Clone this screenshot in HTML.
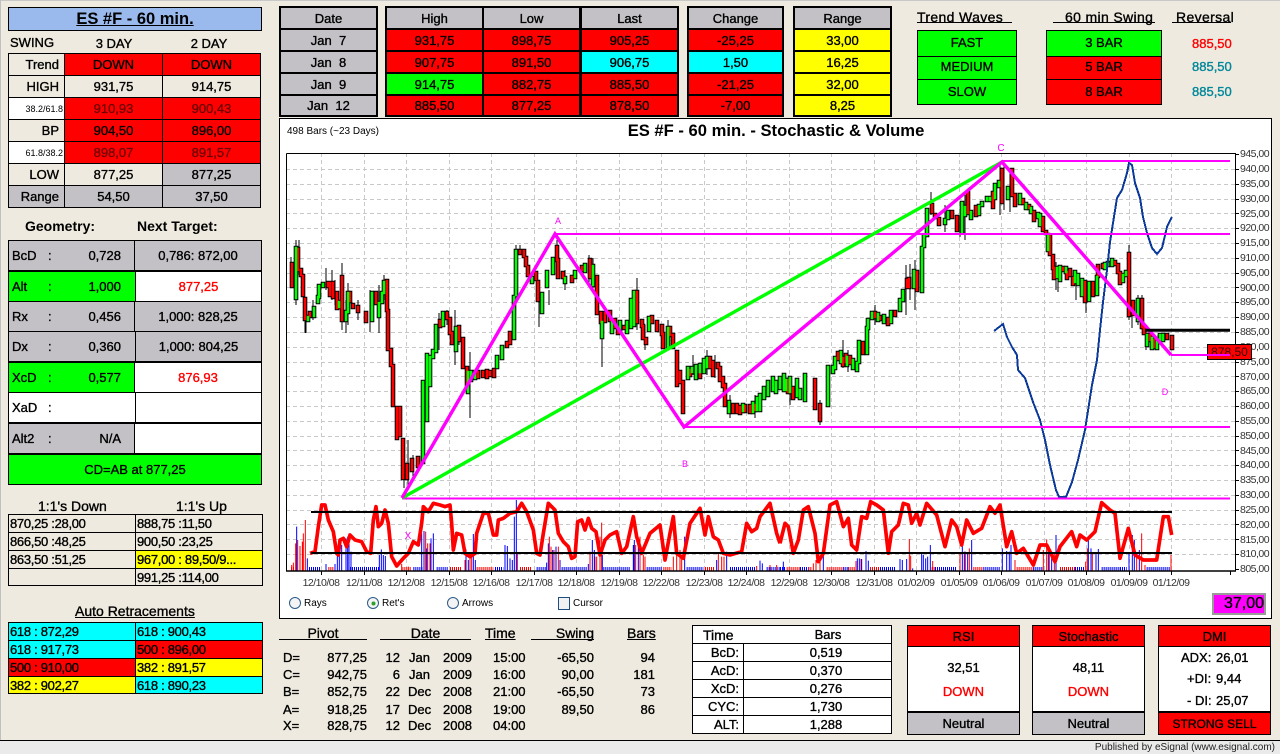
<!DOCTYPE html>
<html><head><meta charset="utf-8"><title>ES #F - 60 min.</title>
<style>
html,body{margin:0;padding:0}
body{width:1280px;height:754px;position:relative;overflow:hidden;background:#EEEADF;font:13px "Liberation Sans",Arial,sans-serif;color:#000;-webkit-text-stroke:.35px}
div{position:absolute;box-sizing:border-box;white-space:pre}
.c{display:flex;align-items:center;justify-content:center}
.b{border:1px solid #000}
.l{justify-content:flex-start;padding-left:1px;letter-spacing:-.3px}
.r{background:#f00}.g{background:#0f0}.y{background:#ff0}.a{background:#0ff}.s{background:#C3C1C5}.w{background:#fff}.e{background:#EEEADF}
.k{background:#000}
.t{font-weight:bold;-webkit-text-stroke:0}
.u{text-decoration:underline}
.h{font-size:14px}
.h2{font-size:14px;letter-spacing:.35px}
.rd{color:#f00}.tl{color:#00869A}
.m{color:#700000}
svg{position:absolute;left:0;top:0}
svg text{font-family:"Liberation Sans",Arial,sans-serif;-webkit-text-stroke:0}
</style></head><body>

<div style="left:0;top:0;width:1280px;height:1px;background:#c8c8c8"></div>
<div style="left:0;top:0;width:1px;height:740px;background:#c0c0c0"></div>
<div style="left:0;top:740px;width:1280px;height:1px;background:#000"></div>
<div style="left:0;top:741px;width:1280px;height:13px;background:#EAEAEA"></div>
<div class="c" style="right:5px;top:741px;height:13px;font-size:10px;-webkit-text-stroke:0;color:#222">Published by eSignal (www.esignal.com)</div>

<!-- LEFT TITLE -->
<div class="c b t u" style="left:8px;top:7px;width:254px;height:24px;background:#9ABAEE;font-size:16.5px">ES #F - 60 min.</div>
<div class="c" style="left:10px;top:34px;height:17px">SWING</div>
<div class="c" style="left:65px;top:35px;width:98px;height:17px">3 DAY</div>
<div class="c" style="left:162px;top:35px;width:94px;height:17px">2 DAY</div>

<div class="c b e" style="left:8px;top:53px;width:57px;height:23px;justify-content:flex-end;padding-right:5px">Trend</div>
<div class="c b r" style="left:64px;top:53px;width:99px;height:23px">DOWN</div>
<div class="c b r" style="left:162px;top:53px;width:99px;height:23px">DOWN</div>
<div class="c b e" style="left:8px;top:75px;width:57px;height:23px;justify-content:flex-end;padding-right:5px">HIGH</div>
<div class="c b e" style="left:64px;top:75px;width:99px;height:23px">931,75</div>
<div class="c b e" style="left:162px;top:75px;width:99px;height:23px">914,75</div>
<div class="c b w" style="left:8px;top:97px;width:57px;height:23px;font-size:9px;justify-content:flex-end;padding-right:1px;-webkit-text-stroke:0">38.2/61.8</div>
<div class="c b r m" style="left:64px;top:97px;width:99px;height:23px">910,93</div>
<div class="c b r m" style="left:162px;top:97px;width:99px;height:23px">900,43</div>
<div class="c b e" style="left:8px;top:119px;width:57px;height:23px;justify-content:flex-end;padding-right:5px">BP</div>
<div class="c b r" style="left:64px;top:119px;width:99px;height:23px">904,50</div>
<div class="c b r" style="left:162px;top:119px;width:99px;height:23px">896,00</div>
<div class="c b w" style="left:8px;top:141px;width:57px;height:23px;font-size:9px;justify-content:flex-end;padding-right:1px;-webkit-text-stroke:0">61.8/38.2</div>
<div class="c b r m" style="left:64px;top:141px;width:99px;height:23px">898,07</div>
<div class="c b r m" style="left:162px;top:141px;width:99px;height:23px">891,57</div>
<div class="c b e" style="left:8px;top:163px;width:57px;height:23px;justify-content:flex-end;padding-right:5px">LOW</div>
<div class="c b e" style="left:64px;top:163px;width:99px;height:23px">877,25</div>
<div class="c b s" style="left:162px;top:163px;width:99px;height:23px">877,25</div>
<div class="c b s" style="left:8px;top:185px;width:57px;height:23px;justify-content:flex-end;padding-right:5px">Range</div>
<div class="c b s" style="left:64px;top:185px;width:99px;height:23px">54,50</div>
<div class="c b s" style="left:162px;top:185px;width:99px;height:23px">37,50</div>

<div class="c t" style="left:25px;top:217px;height:18px;font-size:14px">Geometry:</div>
<div class="c t" style="left:137px;top:217px;height:18px;font-size:14px">Next Target:</div>

<!-- GEOMETRY -->
<div class="k" style="left:8px;top:240px;width:254px;height:245px"></div>
<div class="s" style="left:9px;top:241px;width:125px;height:29px"></div><div class="c s" style="left:135px;top:241px;width:126px;height:29px">0,786: 872,00</div>
<div class="g" style="left:9px;top:272px;width:126px;height:29px"></div><div class="c w rd" style="left:136px;top:272px;width:125px;height:29px">877,25</div>
<div class="s" style="left:9px;top:302px;width:125px;height:29px"></div><div class="c s" style="left:135px;top:302px;width:126px;height:29px">1,000: 828,25</div>
<div class="s" style="left:9px;top:332px;width:126px;height:29px"></div><div class="c s" style="left:136px;top:332px;width:125px;height:29px">1,000: 804,25</div>
<div class="g" style="left:9px;top:363px;width:125px;height:29px"></div><div class="c w rd" style="left:135px;top:363px;width:126px;height:29px">876,93</div>
<div class="w" style="left:9px;top:393px;width:126px;height:29px"></div><div class="w" style="left:136px;top:393px;width:125px;height:29px"></div>
<div class="s" style="left:9px;top:424px;width:125px;height:29px"></div><div class="w" style="left:135px;top:424px;width:126px;height:29px"></div>
<div class="c g" style="left:9px;top:455px;width:252px;height:29px">CD=AB at 877,25</div>
<div class="c" style="left:12px;top:247px;height:17px">BcD</div><div class="c" style="left:48px;top:247px;height:17px">:</div><div class="c" style="left:60px;top:247px;width:61px;height:17px;justify-content:flex-end">0,728</div>
<div class="c" style="left:12px;top:278px;height:17px">Alt</div><div class="c" style="left:48px;top:278px;height:17px">:</div><div class="c" style="left:60px;top:278px;width:61px;height:17px;justify-content:flex-end">1,000</div>
<div class="c" style="left:12px;top:308px;height:17px">Rx</div><div class="c" style="left:48px;top:308px;height:17px">:</div><div class="c" style="left:60px;top:308px;width:61px;height:17px;justify-content:flex-end">0,456</div>
<div class="c" style="left:12px;top:338px;height:17px">Dx</div><div class="c" style="left:48px;top:338px;height:17px">:</div><div class="c" style="left:60px;top:338px;width:61px;height:17px;justify-content:flex-end">0,360</div>
<div class="c" style="left:12px;top:369px;height:17px">XcD</div><div class="c" style="left:48px;top:369px;height:17px">:</div><div class="c" style="left:60px;top:369px;width:61px;height:17px;justify-content:flex-end">0,577</div>
<div class="c" style="left:12px;top:399px;height:17px">XaD</div><div class="c" style="left:48px;top:399px;height:17px">:</div>
<div class="c" style="left:12px;top:430px;height:17px">Alt2</div><div class="c" style="left:48px;top:430px;height:17px">:</div><div class="c" style="left:60px;top:430px;width:61px;height:17px;justify-content:flex-end">N/A</div>

<!-- 1:1 -->
<div class="c h" style="left:38px;top:497px;height:17px">1:1's Down</div>
<div class="c h" style="left:176px;top:497px;height:17px">1:1's Up</div>
<div class="c b l" style="left:8px;top:514px;width:128px;height:19px">870,25 :28,00</div><div class="c b l" style="left:135px;top:514px;width:128px;height:19px">888,75 :11,50</div>
<div class="c b l" style="left:8px;top:532px;width:128px;height:19px">866,50 :48,25</div><div class="c b l" style="left:135px;top:532px;width:128px;height:19px">900,50 :23,25</div>
<div class="c b l" style="left:8px;top:550px;width:128px;height:19px">863,50 :51,25</div><div class="c b l y" style="left:135px;top:550px;width:128px;height:19px">967,00 : 89,50/9...</div>
<div class="c b l" style="left:8px;top:568px;width:128px;height:18px"></div><div class="c b l" style="left:135px;top:568px;width:128px;height:18px">991,25 :114,00</div>

<div class="c u h" style="left:75px;top:602px;height:17px">Auto Retracements</div>
<div class="c b l a" style="left:8px;top:622px;width:128px;height:19px">618 : 872,29</div><div class="c b l a" style="left:135px;top:622px;width:128px;height:19px">618 : 900,43</div>
<div class="c b l a" style="left:8px;top:640px;width:128px;height:19px">618 : 917,73</div><div class="c b l r" style="left:135px;top:640px;width:128px;height:19px">500 : 896,00</div>
<div class="c b l r" style="left:8px;top:658px;width:128px;height:19px">500 : 910,00</div><div class="c b l y" style="left:135px;top:658px;width:128px;height:19px">382 : 891,57</div>
<div class="c b l y" style="left:8px;top:676px;width:128px;height:18px">382 : 902,27</div><div class="c b l a" style="left:135px;top:676px;width:128px;height:18px">618 : 890,23</div>

<!-- TOP TABLES -->
<div class="k" style="left:279px;top:6px;width:99px;height:111px"></div>
<div class="c s" style="left:281px;top:8px;width:95px;height:20px">Date</div>
<div class="c s" style="left:281px;top:30px;width:95px;height:20px">Jan  7</div>
<div class="c s" style="left:281px;top:52px;width:95px;height:20px">Jan  8</div>
<div class="c s" style="left:281px;top:74px;width:95px;height:20px">Jan  9</div>
<div class="c s" style="left:281px;top:96px;width:95px;height:19px">Jan  12</div>

<div class="k" style="left:385px;top:6px;width:294px;height:111px"></div>
<div class="c s" style="left:387px;top:8px;width:95px;height:20px">High</div><div class="c s" style="left:484px;top:8px;width:95px;height:20px">Low</div><div class="c s" style="left:582px;top:8px;width:95px;height:20px">Last</div>
<div class="c r" style="left:387px;top:30px;width:95px;height:20px">931,75</div><div class="c r" style="left:484px;top:30px;width:95px;height:20px">898,75</div><div class="c r" style="left:582px;top:30px;width:95px;height:20px">905,25</div>
<div class="c r" style="left:387px;top:52px;width:95px;height:20px">907,75</div><div class="c r" style="left:484px;top:52px;width:95px;height:20px">891,50</div><div class="c a" style="left:582px;top:52px;width:95px;height:20px">906,75</div>
<div class="c g" style="left:387px;top:74px;width:95px;height:20px">914,75</div><div class="c r" style="left:484px;top:74px;width:95px;height:20px">882,75</div><div class="c r" style="left:582px;top:74px;width:95px;height:20px">885,50</div>
<div class="c r" style="left:387px;top:96px;width:95px;height:19px">885,50</div><div class="c r" style="left:484px;top:96px;width:95px;height:19px">877,25</div><div class="c r" style="left:582px;top:96px;width:95px;height:19px">878,50</div>

<div class="k" style="left:687px;top:6px;width:97px;height:111px"></div>
<div class="c s" style="left:689px;top:8px;width:93px;height:20px">Change</div>
<div class="c r" style="left:689px;top:30px;width:93px;height:20px">-25,25</div>
<div class="c a" style="left:689px;top:52px;width:93px;height:20px">1,50</div>
<div class="c r" style="left:689px;top:74px;width:93px;height:20px">-21,25</div>
<div class="c r" style="left:689px;top:96px;width:93px;height:19px">-7,00</div>

<div class="k" style="left:793px;top:6px;width:99px;height:111px"></div>
<div class="c s" style="left:795px;top:8px;width:95px;height:20px">Range</div>
<div class="c y" style="left:795px;top:30px;width:95px;height:20px">33,00</div>
<div class="c y" style="left:795px;top:52px;width:95px;height:20px">16,25</div>
<div class="c y" style="left:795px;top:74px;width:95px;height:20px">32,00</div>
<div class="c y" style="left:795px;top:96px;width:95px;height:19px">8,25</div>

<div class="c h2" style="left:917px;top:8px;height:17px">Trend Waves</div><div class="k" style="left:917px;top:22px;width:95px;height:1px"></div>
<div class="c h2" style="left:1065px;top:8px;height:17px">60 min Swing</div><div class="k" style="left:1053px;top:22px;width:102px;height:1px"></div>
<div class="c h2" style="left:1176px;top:8px;height:17px">Reversal</div><div class="k" style="left:1172px;top:22px;width:59px;height:1px"></div>

<div class="c b g" style="left:917px;top:30px;width:100px;height:27px;padding-bottom:2px">FAST</div>
<div class="c b g" style="left:917px;top:56px;width:100px;height:24px;padding-bottom:3px">MEDIUM</div>
<div class="c b g" style="left:917px;top:79px;width:100px;height:26px;padding-bottom:2px">SLOW</div>
<div class="c b g" style="left:1046px;top:30px;width:116px;height:27px;padding-bottom:2px">3 BAR</div>
<div class="c b r" style="left:1046px;top:56px;width:116px;height:24px;padding-bottom:3px">5 BAR</div>
<div class="c b r" style="left:1046px;top:79px;width:116px;height:26px;padding-bottom:2px">8 BAR</div>
<div class="c rd" style="left:1192px;top:35px;height:17px">885,50</div>
<div class="c tl" style="left:1192px;top:58px;height:17px">885,50</div>
<div class="c tl" style="left:1192px;top:83px;height:17px">885,50</div>

<!-- CHART FRAME -->
<div class="b w" style="left:279px;top:118px;width:993px;height:501px"></div>
<div class="c t" style="left:500px;top:121px;width:552px;height:19px;font-size:16.6px">ES #F - 60 min. - Stochastic &amp; Volume</div>
<div class="c" style="left:287px;top:124px;height:14px;font-size:10px;-webkit-text-stroke:0">498 Bars (~23 Days)</div>

<svg width="1280" height="754" viewBox="0 0 1280 754">
<defs>
<path id="rb" d="M292 264V286M298 249V270M301 270V275M303 276V295M305 299V319M310 313V316M328 283V286M330 283V295M333 283V297M337 293V308M342 277V320M350 293V301M353 305V307M358 307V311M366 313V321M376 293V303M387 281V310M388 311V349M391 350V365M393 366V405M397 408V438M400 408V435M403 440V478M407 465V478M412 460V470M418 458V466M440 321V326M447 313V318M450 319V333M452 333V343M459 327V340M463 339V367M467 368V385M478 372V377M483 372V376M487 371V377M490 372V375M494 370V376M507 343V346M510 333V343M520 251V253M524 251V256M526 258V265M528 267V275M536 273V279M538 282V300M557 247V260M558 260V277M563 273V277M572 277V281M582 267V270M590 260V277M597 277V313M601 313V322M605 313V321M610 312V320M615 320V327M618 327V333M624 327V328M637 292V322M642 321V326M643 326V338M646 339V343M652 317V322M657 322V330M662 326V334M663 334V347M670 328V335M673 335V347M677 352V385M680 372V382M683 382V412M690 370V375M700 370V377M710 358V367M713 362V375M718 364V367M720 368V380M723 378V386M725 385V405M733 405V412M737 405V412M740 407V413M745 406V411M750 406V412M755 405V410M788 380V392M793 388V398M815 380V408M820 405V420M838 353V359M843 358V365M846 355V362M850 357V363M863 343V353M875 313V317M880 317V319M888 319V324M895 312V315M907 280V287M909 279V287M917 272V290M932 205V212M935 215V217M939 219V224M952 212V217M957 217V230M968 193V213M976 207V215M993 193V207M1002 170V202M1012 170V195M1015 195V205M1023 200V203M1029 206V208M1034 212V220M1043 218V230M1046 232V233M1050 236V254M1053 256V268M1054 268V278M1063 268V270M1067 272V278M1070 270V275M1073 278V284M1085 282V301M1093 283V295M1098 266V276M1103 265V267M1115 262V264M1118 265V272M1120 273V283M1129 254V315M1133 302V314M1142 300V327M1144 327V333M1150 335V340M1154 340V347M1167 335V338M1172 337V348"/>
<path id="gb" d="M296 248V298M308 317V320M314 308V316M318 297V302M319 286V297M323 284V286M339 302V307M346 312V320M348 293V312M372 293V320M379 303V316M382 293V302M384 282V293M423 382V462M427 355V420M430 357V385M433 351V357M436 326V351M443 313V325M456 328V350M468 372V392M471 372V380M475 372V378M497 357V367M502 347V358M514 297V338M516 251V295M532 278V282M542 294V312M547 272V286M553 259V273M565 278V282M575 272V277M585 265V271M593 266V285M602 322V337M612 322V332M620 322V330M627 322V332M631 300V327M634 292V325M649 318V330M668 328V347M688 368V378M692 368V372M696 366V378M700 365V372M704 360V372M707 358V367M729 402V412M743 405V411M753 403V412M757 398V410M760 395V410M764 388V398M768 382V395M773 378V390M776 382V392M780 378V388M784 375V390M786 380V390M790 378V392M797 380V396M800 390V398M805 375V400M828 367V405M833 367V372M835 358V368M841 352V362M847 357V365M853 360V368M857 363V370M859 342V362M867 328V353M868 320V328M872 313V318M878 314V320M884 316V322M891 312V322M900 300V310M903 291V300M914 271V287M922 248V291M924 236V246M927 210V235M945 220V223M948 212V218M962 203V232M965 207V215M971 212V218M979 206V214M982 203V205M987 198V200M990 198V200M995 185V198M999 182V186M1008 188V198M1020 195V203M1026 204V208M1031 208V212M1038 214V217M1040 215V225M1048 235V250M1057 268V277M1060 267V280M1066 268V272M1075 272V282M1078 275V284M1082 280V295M1089 283V300M1097 277V294M1105 264V268M1108 263V265M1112 260V265M1123 275V281M1126 272V275M1138 300V320M1147 335V345M1152 338V348M1160 335V340M1163 335V340M1157 342V348"/>
</defs>
<!-- grid -->
<path d="M286 169.5H1235M286 184.5H1235M286 199.5H1235M286 213.5H1235M286 228.5H1235M286 243.5H1235M286 258.5H1235M286 273.5H1235M286 287.5H1235M286 302.5H1235M286 317.5H1235M286 332.5H1235M286 347.5H1235M286 362.5H1235M286 376.5H1235M286 391.5H1235M286 406.5H1235M286 421.5H1235M286 436.5H1235M286 450.5H1235M286 465.5H1235M286 480.5H1235M286 495.5H1235M286 510.5H1235M286 524.5H1235M286 539.5H1235M286 554.5H1235" stroke="#c9c9c9" stroke-width="1" stroke-dasharray="4 3" fill="none"/>
<path d="M321.5 153V571M364.5 153V571M406.5 153V571M449.5 153V571M491.5 153V571M534.5 153V571M576.5 153V571M619.5 153V571M661.5 153V571M704.5 153V571M746.5 153V571M789.5 153V571M831.5 153V571M874.5 153V571M916.5 153V571M959.5 153V571M1001.5 153V571M1044.5 153V571M1086.5 153V571M1129.5 153V571M1171.5 153V571" stroke="#c9c9c9" stroke-width="1" stroke-dasharray="4 3" fill="none"/>

<!-- wicks -->
<path d="M291 257V287M296 240V305M299 240V275M305 300V333M306 315V333M313 300V320M326 268V290M332 270V300M335 280V305M342 263V330M346 300V333M348 283V325M358 300V320M370 290V332M379 285V333M384 275V300M408 440V490M404 470V488M413 455V480M439 313V350M447 310V325M455 310V365M459 325V345M470 352V418M516 245V251M520 245V255M539 300V327M549 290V305M557 240V262M565 270V290M589 255V285M593 258V290M602 333V367M637 278V330M645 325V350M668 320V350M693 355V375M707 350V375M715 355V378M730 395V418M755 395V418M790 380V405M820 400V425M843 340V368M848 350V372M875 305V325M906 265V315M910 264V300M915 260V310M931 192V215M945 205V232M965 195V240M960 215V237M1000 162V215M1004 162V210M1010 170V212M1056 262V290M1058 275V292M1086 298V313M1076 275V300M1129 245V320M1132 300V328M1138 295V325M1142 295V330M1146 328V350M1151 330V350M1158 335V350" stroke="#000" stroke-width="1" fill="none"/>
<!-- candles -->
<g fill="none" stroke-linecap="square">
<use href="#rb" stroke="#000" stroke-width="4.6"/><use href="#gb" stroke="#000" stroke-width="4.6"/>
<use href="#rb" stroke="#f00" stroke-width="2.6"/><use href="#gb" stroke="#0f0" stroke-width="2.6"/>
</g>

<!-- blue line -->
<polyline fill="none" stroke="#0B3A9A" stroke-width="2" shape-rendering="crispEdges" points="994,331 1003,324 1007,337 1012,347 1017,355 1018,370 1025,378 1033,402 1040,420 1045,440 1050,465 1056,490 1059,497 1066,497 1072,482 1078,460 1085,430 1092,385 1097,360 1100,330 1103,302 1107,270 1110,242 1113,223 1117,198 1122,190 1127,173 1129,163 1132,165 1135,183 1140,198 1143,217 1147,233 1152,248 1157,254 1162,248 1167,227 1172,217"/>

<!-- horizontals -->
<path d="M402 498.5H1230M555 234H1230M1002 161H1230M684 427H1230M1171 355H1230" stroke="#f0f" stroke-width="2" fill="none"/>
<path d="M402 498L1002 162" stroke="#0f0" stroke-width="3.4" fill="none"/>
<polyline points="402,498 555,234 684,427 1002,162 1171,355" stroke="#f0f" stroke-width="3.4" fill="none"/>
<path d="M1145 330.2H1230" stroke="#000" stroke-width="3" fill="none"/>

<text x="1001" y="151" font-size="10" fill="#f0f" text-anchor="middle">C</text>
<text x="558" y="224" font-size="9" fill="#f0f" text-anchor="middle">A</text>
<text x="685" y="467" font-size="9" fill="#f0f" text-anchor="middle">B</text>
<text x="1165" y="395" font-size="9" fill="#f0f" text-anchor="middle">D</text>
<text x="408" y="539" font-size="10" fill="#f0f" text-anchor="middle">X</text>

<!-- volume -->
<g transform="translate(280 490) scale(.33333)" fill="none" stroke-width="3">
<path stroke="#f00" stroke-dasharray="3 3" stroke-width="12" d="M33 237H45M145 237H160M365 237H395M510 237H545M590 237H640M720 237H755M1150 237H1175M1275 237H1305"/>
<path stroke="#00f" stroke-dasharray="3 3" stroke-width="12" d="M87 237H120M210 237H300M400 237H430M470 237H505M645 237H670M770 237H800M845 237H920M970 237H1050M1100 237H1145M1220 237H1270M1350 237H1425M1460 237H1500"/>
<path stroke="#f00" d="M35 243V225M40 243V218M47 243V160M53 243V150M60 243V168M67 243V155M70 243V130M76 243V90M365 243V222M385 243V230M437 243V125M443 243V160M450 243V160M555 243V210M570 243V190M575 243V190M712 243V190M808 243V140M813 243V170M822 243V180M835 243V170M930 243V185M945 243V200M950 243V200M960 243V140M965 243V98M1067 243V165M1080 243V140M1090 243V195M1095 243V200M1180 243V200M1190 243V190M1200 243V180M1205 243V200M1315 243V190M1325 243V200M1332 243V200M1430 243V228M1470 243V225M1490 243V225"/>
<path stroke="#00f" d="M50 243V110M82 243V205M138 243V222M165 243V222M172 243V190M178 243V150M185 243V165M198 243V145M203 243V140M207 243V130M213 243V185M298 243V195M304 243V178M310 243V195M316 243V198M425 243V130M432 243V123M440 243V175M453 243V145M460 243V130M558 243V178M565 243V210M580 243V132M586 243V210M675 243V165M682 243V168M690 243V205M697 243V210M703 243V80M709 243V30M800 243V218M805 243V160M818 243V180M828 243V170M840 243V210M925 243V222M937 243V150M943 243V180M967 243V195M1060 243V165M1063 243V150M1075 243V165M1214 243V140M1310 243V210M1340 243V185M1440 243V212M1447 243V220"/>
</g>
<g transform="translate(780 490) scale(.33333)" fill="none" stroke-width="3">
<path stroke="#f00" stroke-dasharray="3 3" stroke-width="12" d="M20 237H60M85 237H95M140 237H190M205 237H225M270 237H300M455 237H465M580 237H610M710 237H760M840 237H885"/>
<path stroke="#00f" stroke-dasharray="3 3" stroke-width="12" d="M0 237H15M60 237H85M190 237H205M300 237H345M465 237H530M610 237H660M760 237H790M885 237H915M965 237H1020M1020 237H1040M1100 237H1170"/>
<path stroke="#f00" d="M100 243V220M108 243V210M120 243V200M228 243V213M243 243V207M388 243V147M392 243V197M458 243V213M540 243V190M556 243V185M568 243V175M705 243V210M790 243V180M800 243V148M808 243V172M823 243V190M917 243V215M922 243V175M937 243V190M1070 243V195M1085 243V130M1095 243V225M1173 243V195"/>
<path stroke="#00f" d="M10 243V215M130 243V195M232 243V205M238 243V205M245 243V207M258 243V183M265 243V212M360 243V207M367 243V210M380 243V207M398 243V235M425 243V190M430 243V195M437 243V205M443 243V200M451 243V165M547 243V162M553 243V185M563 243V190M575 243V150M667 243V175M680 243V183M688 243V185M693 243V165M805 243V175M815 243V190M828 243V135M925 243V150M933 243V175M948 243V187M955 243V177M1047 243V190M1057 243V135M1063 243V150M1078 243V180"/>
</g>

<!-- oscillator -->
<polyline transform="translate(280 490) scale(.33333)" fill="none" stroke="#f00" stroke-width="11" stroke-linejoin="round" points="90,190 105,185 115,110 125,45 135,45 145,90 160,125 170,190 175,195 180,150 190,145 200,170 210,135 225,150 245,155 260,185 272,190 280,90 288,50 295,110 305,100 315,60 325,100 335,200 350,228 370,205 385,190 400,155 415,165 425,100 430,50 445,65 460,40 480,45 495,50 510,45 515,100 520,180 530,130 545,135 555,190 570,200 585,190 590,130 610,70 625,70 640,135 650,135 655,90 670,85 690,70 710,65 725,40 740,65 760,120 770,190 780,195 790,130 805,40 825,60 835,130 850,155 865,170 875,205 885,200 893,95 905,90 915,120 925,85 935,115 948,125 960,195 975,150 990,135 1010,125 1025,190 1040,170 1060,80 1070,140 1085,190 1110,130 1140,105 1155,210 1170,130 1180,80 1190,190 1210,205 1230,100 1260,55 1275,135 1285,80 1300,140 1315,150 1330,190 1350,195 1385,185 1400,100 1415,125 1430,115 1440,80 1470,40 1490,130 1500,160"/>
<polyline transform="translate(780 490) scale(.33333)" fill="none" stroke="#f00" stroke-width="11" stroke-linejoin="round" points="0,160 15,100 25,110 40,190 55,150 70,60 85,50 105,130 115,215 130,190 150,45 170,35 190,110 205,85 215,165 230,180 245,80 260,85 272,35 290,45 310,60 325,190 335,125 355,105 370,40 385,45 395,100 410,70 420,105 440,40 470,75 495,170 515,90 530,110 545,165 560,90 580,130 605,115 630,50 645,70 660,45 680,170 695,125 710,190 730,175 760,225 780,165 800,165 825,215 840,170 875,125 890,170 900,135 920,150 945,125 965,38 990,60 1005,70 1020,205 1045,115 1065,195 1090,210 1130,210 1150,80 1165,80 1175,135"/>
<path d="M311 512H1172M311 553H1172" stroke="#000" stroke-width="2" fill="none"/>

<!-- axes -->
<path d="M286.5 153.5H1235.5V571M286.5 153.5V571" stroke="#000" stroke-width="1" fill="none"/>
<path d="M286 571H1236" stroke="#000" stroke-width="1.6" fill="none"/>
<path d="M321.5 571V575M364.5 571V575M406.5 571V575M449.5 571V575M491.5 571V575M534.5 571V575M576.5 571V575M619.5 571V575M661.5 571V575M704.5 571V575M746.5 571V575M789.5 571V575M831.5 571V575M874.5 571V575M916.5 571V575M959.5 571V575M1001.5 571V575M1044.5 571V575M1086.5 571V575M1129.5 571V575M1171.5 571V575M1230.5 571V575" stroke="#000" fill="none"/>
<path d="M1235 154.5H1239M1235 169.5H1239M1235 184.5H1239M1235 199.5H1239M1235 213.5H1239M1235 228.5H1239M1235 243.5H1239M1235 258.5H1239M1235 273.5H1239M1235 287.5H1239M1235 302.5H1239M1235 317.5H1239M1235 332.5H1239M1235 347.5H1239M1235 362.5H1239M1235 376.5H1239M1235 391.5H1239M1235 406.5H1239M1235 421.5H1239M1235 436.5H1239M1235 450.5H1239M1235 465.5H1239M1235 480.5H1239M1235 495.5H1239M1235 510.5H1239M1235 524.5H1239M1235 539.5H1239M1235 554.5H1239M1235 569.5H1239" stroke="#000" fill="none"/>

<!-- price labels -->
<g font-size="10.5" fill="#333" letter-spacing="-.5">
<text x="1240" y="157">945,00</text><text x="1240" y="172">940,00</text><text x="1240" y="187">935,00</text><text x="1240" y="202">930,00</text><text x="1240" y="217">925,00</text><text x="1240" y="231">920,00</text><text x="1240" y="246">915,00</text><text x="1240" y="261">910,00</text><text x="1240" y="276">905,00</text><text x="1240" y="291">900,00</text><text x="1240" y="305">895,00</text><text x="1240" y="320">890,00</text><text x="1240" y="335">885,00</text><text x="1240" y="350">880,00</text><text x="1240" y="365">875,00</text><text x="1240" y="380">870,00</text><text x="1240" y="394">865,00</text><text x="1240" y="409">860,00</text><text x="1240" y="424">855,00</text><text x="1240" y="439">850,00</text><text x="1240" y="454">845,00</text><text x="1240" y="468">840,00</text><text x="1240" y="483">835,00</text><text x="1240" y="498">830,00</text><text x="1240" y="513">825,00</text><text x="1240" y="528">820,00</text><text x="1240" y="543">815,00</text><text x="1240" y="557">810,00</text><text x="1240" y="572">805,00</text>
</g>
<g font-size="10.5" fill="#333" letter-spacing="-.5" text-anchor="middle">
<text x="321" y="586">12/10/08</text><text x="364" y="586">12/11/08</text><text x="406" y="586">12/12/08</text><text x="449" y="586">12/15/08</text><text x="491" y="586">12/16/08</text><text x="534" y="586">12/17/08</text><text x="576" y="586">12/18/08</text><text x="619" y="586">12/19/08</text><text x="661" y="586">12/22/08</text><text x="704" y="586">12/23/08</text><text x="746" y="586">12/24/08</text><text x="789" y="586">12/29/08</text><text x="831" y="586">12/30/08</text><text x="874" y="586">12/31/08</text><text x="916" y="586">01/02/09</text><text x="959" y="586">01/05/09</text><text x="1001" y="586">01/06/09</text><text x="1044" y="586">01/07/09</text><text x="1086" y="586">01/08/09</text><text x="1129" y="586">01/09/09</text><text x="1171" y="586">01/12/09</text>
</g>

<!-- label box -->
<rect x="1207.5" y="344.5" width="44" height="15" fill="#f00" stroke="#000"/>
<text x="1229.5" y="356" font-size="12" fill="#300" text-anchor="middle">878,50</text>
<path d="M1171 355H1230" stroke="#f0f" stroke-width="2" fill="none"/>

<!-- radios -->
<circle cx="295" cy="603" r="5.5" fill="#f4f4f4" stroke="#2A5A8A"/>
<circle cx="373" cy="603" r="5.5" fill="#f4f4f4" stroke="#2A5A8A"/><circle cx="373.5" cy="603.5" r="2" fill="#2CA02C"/>
<circle cx="453" cy="603" r="5.5" fill="#f4f4f4" stroke="#2A5A8A"/>
<rect x="558.5" y="597.5" width="11" height="12" fill="#f2f2f2" stroke="#1C4E80"/>
<g font-size="10" fill="#000">
<text x="304" y="606">Rays</text><text x="382" y="606">Ret's</text><text x="462" y="606">Arrows</text><text x="573" y="606">Cursor</text>
</g>
</svg>

<div class="c" style="left:1212px;top:593px;width:54px;height:22px;background:#f0f;border:2px solid #9a9a9a;font-size:16px;justify-content:flex-end;padding-right:0">37,00</div>

<!-- PIVOT TABLE -->
<div class="c h" style="left:279px;top:625px;width:88px;height:16px">Pivot</div><div class="k" style="left:279px;top:639px;width:88px;height:1px"></div>
<div class="c h" style="left:380px;top:625px;width:91px;height:16px">Date</div><div class="k" style="left:380px;top:639px;width:91px;height:1px"></div>
<div class="c u h" style="left:485px;top:625px;height:16px">Time</div>
<div class="c h" style="left:531px;top:625px;width:63px;height:16px;justify-content:flex-end">Swing</div><div class="k" style="left:531px;top:639px;width:63px;height:1px"></div>
<div class="c u h" style="left:627px;top:625px;height:16px">Bars</div>

<div class="c" style="left:283px;top:649px;height:16px">D=</div><div class="c" style="left:300px;top:649px;width:67px;height:16px;justify-content:flex-end">877,25</div><div class="c" style="left:380px;top:649px;width:20px;height:16px;justify-content:flex-end">12</div><div class="c" style="left:409px;top:649px;height:16px">Jan</div><div class="c" style="left:443px;top:649px;height:16px">2009</div><div class="c" style="left:493px;top:649px;height:16px">15:00</div><div class="c" style="left:540px;top:649px;width:54px;height:16px;justify-content:flex-end">-65,50</div><div class="c" style="left:620px;top:649px;width:35px;height:16px;justify-content:flex-end">94</div>
<div class="c" style="left:283px;top:666px;height:16px">C=</div><div class="c" style="left:300px;top:666px;width:67px;height:16px;justify-content:flex-end">942,75</div><div class="c" style="left:380px;top:666px;width:20px;height:16px;justify-content:flex-end">6</div><div class="c" style="left:409px;top:666px;height:16px">Jan</div><div class="c" style="left:443px;top:666px;height:16px">2009</div><div class="c" style="left:493px;top:666px;height:16px">16:00</div><div class="c" style="left:540px;top:666px;width:54px;height:16px;justify-content:flex-end">90,00</div><div class="c" style="left:620px;top:666px;width:35px;height:16px;justify-content:flex-end">181</div>
<div class="c" style="left:283px;top:683px;height:16px">B=</div><div class="c" style="left:300px;top:683px;width:67px;height:16px;justify-content:flex-end">852,75</div><div class="c" style="left:380px;top:683px;width:20px;height:16px;justify-content:flex-end">22</div><div class="c" style="left:408px;top:683px;height:16px">Dec</div><div class="c" style="left:443px;top:683px;height:16px">2008</div><div class="c" style="left:493px;top:683px;height:16px">21:00</div><div class="c" style="left:540px;top:683px;width:54px;height:16px;justify-content:flex-end">-65,50</div><div class="c" style="left:620px;top:683px;width:35px;height:16px;justify-content:flex-end">73</div>
<div class="c" style="left:283px;top:701px;height:16px">A=</div><div class="c" style="left:300px;top:701px;width:67px;height:16px;justify-content:flex-end">918,25</div><div class="c" style="left:380px;top:701px;width:20px;height:16px;justify-content:flex-end">17</div><div class="c" style="left:408px;top:701px;height:16px">Dec</div><div class="c" style="left:443px;top:701px;height:16px">2008</div><div class="c" style="left:493px;top:701px;height:16px">19:00</div><div class="c" style="left:540px;top:701px;width:54px;height:16px;justify-content:flex-end">89,50</div><div class="c" style="left:620px;top:701px;width:35px;height:16px;justify-content:flex-end">86</div>
<div class="c" style="left:283px;top:717px;height:16px">X=</div><div class="c" style="left:300px;top:717px;width:67px;height:16px;justify-content:flex-end">828,75</div><div class="c" style="left:380px;top:717px;width:20px;height:16px;justify-content:flex-end">12</div><div class="c" style="left:408px;top:717px;height:16px">Dec</div><div class="c" style="left:443px;top:717px;height:16px">2008</div><div class="c" style="left:493px;top:717px;height:16px">04:00</div>

<!-- TIME/BARS -->
<div class="b w" style="left:692px;top:625px;width:200px;height:19px"></div>
<div class="c h" style="left:703px;top:626px;height:17px">Time</div><div class="c" style="left:770px;top:626px;width:116px;height:17px">Bars</div>
<div class="c b w" style="left:692px;top:643px;width:52px;height:19px;justify-content:flex-end;padding-right:4px">BcD:</div><div class="c b w" style="left:743px;top:643px;width:149px;height:19px;padding-left:17px">0,519</div>
<div class="c b w" style="left:692px;top:661px;width:52px;height:19px;justify-content:flex-end;padding-right:4px">AcD:</div><div class="c b w" style="left:743px;top:661px;width:149px;height:19px;padding-left:17px">0,370</div>
<div class="c b w" style="left:692px;top:679px;width:52px;height:19px;justify-content:flex-end;padding-right:4px">XcD:</div><div class="c b w" style="left:743px;top:679px;width:149px;height:19px;padding-left:17px">0,276</div>
<div class="c b w" style="left:692px;top:697px;width:52px;height:19px;justify-content:flex-end;padding-right:4px">CYC:</div><div class="c b w" style="left:743px;top:697px;width:149px;height:19px;padding-left:17px">1,730</div>
<div class="c b w" style="left:692px;top:715px;width:52px;height:19px;justify-content:flex-end;padding-right:4px">ALT:</div><div class="c b w" style="left:743px;top:715px;width:149px;height:19px;padding-left:17px">1,288</div>

<!-- RSI -->
<div class="b w" style="left:907px;top:625px;width:113px;height:110px"></div>
<div class="c r" style="left:908px;top:626px;width:111px;height:21px;border-bottom:1px solid #000">RSI</div>
<div class="c" style="left:907px;top:659px;width:113px;height:17px">32,51</div>
<div class="c rd" style="left:907px;top:683px;width:113px;height:17px">DOWN</div>
<div class="k" style="left:908px;top:711px;width:111px;height:2px"></div>
<div class="c s" style="left:908px;top:713px;width:111px;height:21px">Neutral</div>

<div class="b w" style="left:1032px;top:625px;width:113px;height:110px"></div>
<div class="c r" style="left:1033px;top:626px;width:111px;height:21px;border-bottom:1px solid #000">Stochastic</div>
<div class="c" style="left:1032px;top:659px;width:113px;height:17px">48,11</div>
<div class="c rd" style="left:1032px;top:683px;width:113px;height:17px">DOWN</div>
<div class="k" style="left:1033px;top:711px;width:111px;height:2px"></div>
<div class="c s" style="left:1033px;top:713px;width:111px;height:21px">Neutral</div>

<div class="b w" style="left:1158px;top:625px;width:113px;height:110px"></div>
<div class="c r" style="left:1159px;top:626px;width:111px;height:21px;border-bottom:1px solid #000">DMI</div>
<div class="c" style="left:1181px;top:649px;height:17px">ADX:</div><div class="c" style="left:1216px;top:649px;height:17px">26,01</div>
<div class="c" style="left:1187px;top:670px;height:17px">+DI:</div><div class="c" style="left:1216px;top:670px;height:17px">9,44</div>
<div class="c" style="left:1187px;top:692px;height:17px">- DI:</div><div class="c" style="left:1216px;top:692px;height:17px">25,07</div>
<div class="k" style="left:1159px;top:711px;width:111px;height:2px"></div>
<div class="c r" style="left:1159px;top:713px;width:111px;height:21px;font-size:12px">STRONG SELL</div>

</body></html>
